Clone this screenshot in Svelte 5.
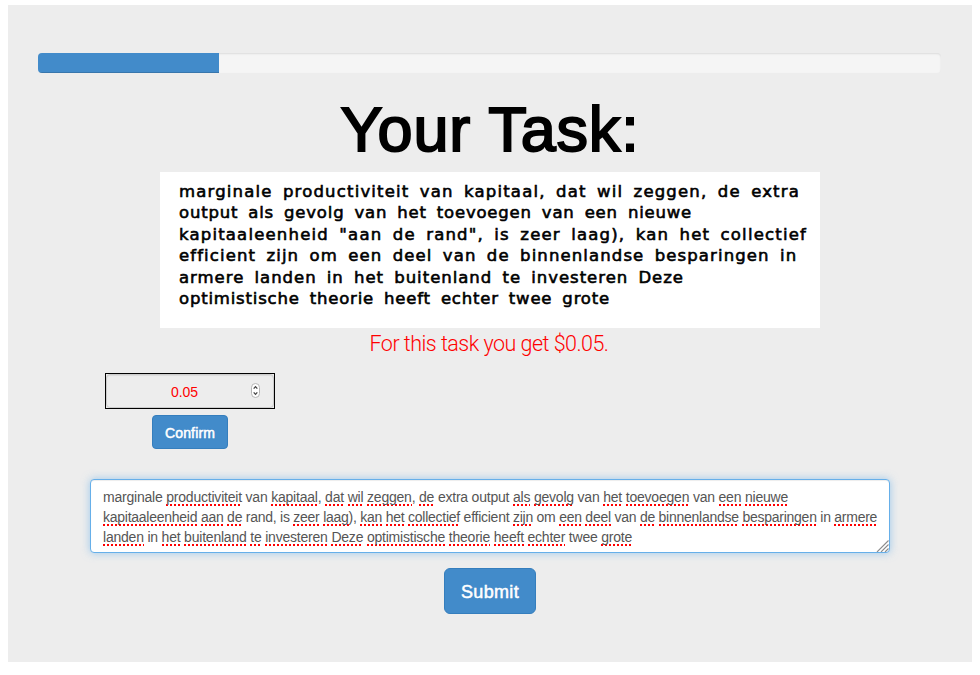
<script>
  const progress = 20;
  const note = [
    ['marginale productiviteit van kapitaal, dat wil zeggen, de extra', 621],
    ['output als gevolg van het toevoegen van een nieuwe', 513],
    ['kapitaaleenheid "aan de rand", is zeer laag), kan het collectief', 628],
    ['efficient zijn om een deel van de binnenlandse besparingen in', 618],
    ['armere landen in het buitenland te investeren Deze', 505],
    ['optimistische theorie heeft echter twee grote', 431]
  ];
  // Words between underscores are flagged by the spelling checker.
  const answer = [
    ['marginale _productiviteit_ van _kapitaal_, _dat_ _wil_ _zeggen_, _de_ extra output _als_ _gevolg_ van _het_ _toevoegen_ van _een_ _nieuwe_', 685],
    ['_kapitaaleenheid_ _aan_ _de_ rand, is _zeer_ _laag_), _kan_ _het_ _collectief_ efficient _zijn_ om _een_ _deel_ van _de_ _binnenlandse_ _besparingen_ in _armere_', 774],
    ['_landen_ in _het_ _buitenland_ _te_ _investeren_ _Deze_ _optimistische_ _theorie_ _heeft_ _echter_ twee _grote_', 529]
  ].map(([text, width]) => ({ parts: text.split('_'), width }));

  // Tracks the letters so that a line takes up the given width.
  function fit(node, width) {
    const apply = () => {
      node.style.letterSpacing = '0px';
      const gap = (width - node.getBoundingClientRect().width) / node.textContent.length;
      node.style.letterSpacing = `${gap}px`;
    };
    apply();
    document.fonts.ready.then(apply);
  }
</script>

<main>
  <div class="progress"><div class="bar" style="width: {progress}%"></div></div>
  <h1><span use:fit={299}>Your Task:</span></h1>
  <section class="note">
    {#each note as [text, width]}
      <div><span use:fit={width}>{text}</span></div>
    {/each}
  </section>
  <p class="reward"><span use:fit={239}>For this task you get $0.05.</span></p>
  <div class="bid">
    <div class="number">
      <div class="field">
        <span class="value">0.05</span>
        <svg class="spinner" width="9" height="15" viewBox="0 0 9 15">
          <rect x=".5" y=".5" width="8" height="14" rx="4" fill="#fff" stroke="#b5b5b5" />
          <path d="M2.7 5.6 4.5 3.6 6.3 5.6M2.7 9.4 4.5 11.4 6.3 9.4" fill="none" stroke="#444" stroke-width="1.3" />
        </svg>
      </div>
    </div>
    <button class="confirm"><span use:fit={50}>Confirm</span></button>
  </div>
  <div class="answer">
    {#each answer as line}
      <div><span use:fit={line.width}>{#each line.parts as part, i}{#if i % 2}<span class="miss">{part}</span>{:else}{part}{/if}{/each}</span></div>
    {/each}
    <svg class="grip" width="13" height="12" viewBox="0 0 13 12">
      <path d="M1 12 12.5 .5M5 12 12.5 4.5M9 12 12.5 8.5" stroke="#8c8c8c" stroke-width="1.1" />
    </svg>
  </div>
  <button class="submit"><span use:fit={58}>Submit</span></button>
</main>

<style>
  :global(body) { background: #fff; }
  main {
    box-sizing: border-box;
    width: 964px;
    height: 657px;
    margin: 5px 8px 0;
    padding: 48px 32px 0 30px;
    background: #ededed;
    display: flex;
    flex-direction: column;
    align-items: center;
    font-family: "Liberation Sans", Arial, sans-serif;
    font-size: 14px;
  }
  main span { white-space: pre; }
  .progress {
    width: 903px;
    height: 20px;
    flex: none;
    align-self: flex-start;
    border-radius: 4px;
    overflow: hidden;
    background: #f5f5f5;
    box-shadow: inset 0 1px 2px rgba(0, 0, 0, .1);
  }
  .bar {
    height: 100%;
    background: #428bca;
    box-shadow: inset 0 -1px 0 rgba(0, 0, 0, .15);
  }
  h1 {
    margin: 20px 0 0;
    height: 79px;
    line-height: 73px;
    font-size: 63px;
    font-weight: 400;
    color: #000;
    -webkit-text-stroke: 2px #000;
    padding-left: 2px;
  }
  .note {
    box-sizing: border-box;
    width: 660px;
    height: 156px;
    padding: 9px 0 0 19px;
    margin-left: 2px;
    background: #fff;
    color: #000;
    font: 400 16.5px/21.4px "DejaVu Sans", sans-serif;
    word-spacing: 4px;
    -webkit-text-stroke: .6px #000;
  }
  .reward {
    margin: 0;
    height: 45px;
    line-height: 31px;
    font-family: Roboto, sans-serif;
    font-size: 21.5px;
    font-weight: 300;
    color: #f00;
  }
  .bid {
    width: 170px;
    margin-right: 598px;
    display: flex;
    flex-direction: column;
    align-items: center;
    gap: 6px;
  }
  .number {
    box-sizing: border-box;
    width: 170px;
    height: 36px;
    border: 1px solid #000;
  }
  .field {
    box-sizing: border-box;
    height: 34px;
    border: 1px solid #ccc;
    border-radius: 4px;
    box-shadow: inset 0 1px 1px rgba(0, 0, 0, .075);
    padding: 0 13px 0 11px;
    display: flex;
    align-items: center;
    color: #f00;
  }
  .value { flex: 1; text-align: center; padding-top: 2px; }
  .spinner { margin-top: -1px; }
  button {
    box-sizing: border-box;
    padding: 0;
    border: 1px solid #357ebd;
    background: #428bca;
    color: #fff;
    font-family: inherit;
    -webkit-text-stroke: .5px #fff;
  }
  .confirm {
    width: 76px;
    height: 34px;
    padding-top: 2px;
    border-radius: 4px;
    font-size: 14px;
    line-height: 30px;
  }
  .answer {
    position: relative;
    box-sizing: border-box;
    width: 800px;
    height: 74px;
    margin: 30px 0 15px 2px;
    padding: 7px 12px;
    border: 1px solid #66afe9;
    border-radius: 4px;
    background: #fff;
    box-shadow: inset 0 1px 1px rgba(0, 0, 0, .075), 0 0 8px rgba(102, 175, 233, .6);
    color: #555;
    line-height: 20px;
  }
  .miss {
    padding-bottom: 1px;
    background: repeating-linear-gradient(90deg, #f00 0 2px, transparent 2px 4px) left bottom / 100% 2px no-repeat;
  }
  .grip { position: absolute; right: 0; bottom: 0; }
  .submit {
    width: 92px;
    height: 46px;
    margin-left: 2px;
    padding-top: 2px;
    border-radius: 6px;
    font-size: 18px;
    line-height: 42px;
  }
</style>
